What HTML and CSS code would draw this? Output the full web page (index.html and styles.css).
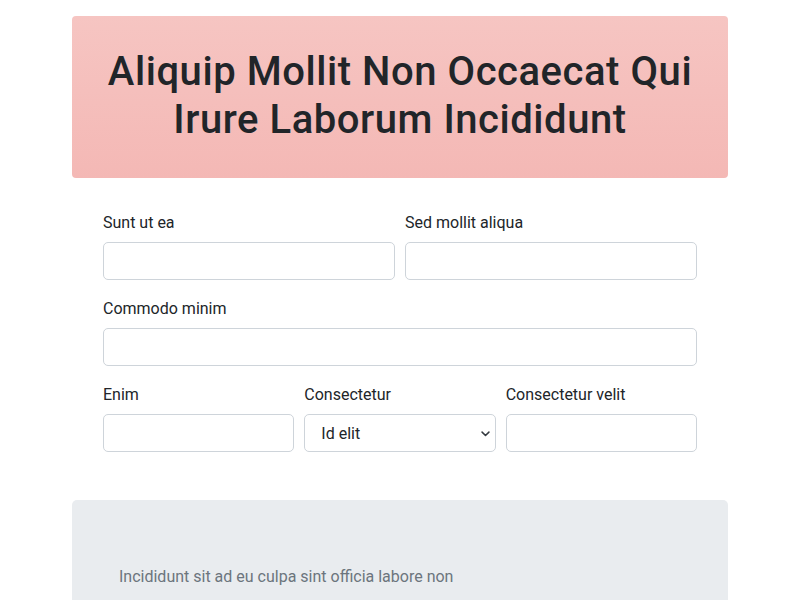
FILE: index.html
```html
<!DOCTYPE html>
<html lang="en">
<head>
<meta charset="utf-8">
<title>Form</title>
<link rel="stylesheet" href="styles.css">
</head>
<body>
<div class="container">
  <header class="hero">
    <h1 class="hero-title">Aliquip Mollit Non Occaecat Qui Irure Laborum Incididunt</h1>
  </header>
  <form class="form">
    <div class="row cols-2">
      <div class="field">
        <label class="label" for="f1">Sunt ut ea</label>
        <input class="input" id="f1" type="text">
      </div>
      <div class="field">
        <label class="label" for="f2">Sed mollit aliqua</label>
        <input class="input" id="f2" type="text">
      </div>
    </div>
    <div class="row cols-1">
      <div class="field">
        <label class="label" for="f3">Commodo minim</label>
        <input class="input" id="f3" type="text">
      </div>
    </div>
    <div class="row cols-3">
      <div class="field">
        <label class="label" for="f4">Enim</label>
        <input class="input" id="f4" type="text">
      </div>
      <div class="field">
        <label class="label" for="f5">Consectetur</label>
        <select class="input select" id="f5">
          <option>Id elit</option>
        </select>
      </div>
      <div class="field">
        <label class="label" for="f6">Consectetur velit</label>
        <input class="input" id="f6" type="text">
      </div>
    </div>
  </form>
  <section class="panel">
    <p class="panel-text">Incididunt sit ad eu culpa sint officia labore non</p>
  </section>
</div>
</body>
</html>
```
FILE: styles.css
```css
* { box-sizing: border-box; }
html, body { margin: 0; padding: 0; }
body {
  font-family: Roboto, "Open Sans", sans-serif;
  color: #212529;
  background: #fff;
  font-size: 16px;
  line-height: 1.5;
}
.container {
  width: 656px;
  margin: 0 auto;
  padding-top: 16px;
}
.hero {
  background: linear-gradient(#f6c5c2, #f4b8b5);
  border-radius: 4px;
  padding: 32px 24px 34px;
  text-align: center;
}
.hero-title {
  margin: 0;
  font-size: 40px;
  font-weight: 500;
  line-height: 48px;
  letter-spacing: 0.55px;
}
.form {
  padding: 32px 31px 48px;
  display: flex;
  flex-direction: column;
  gap: 16px;
}
.row {
  display: grid;
  gap: 10px;
}
.cols-1 { grid-template-columns: 1fr; }
.cols-2 { grid-template-columns: 1fr 1fr; }
.cols-3 { grid-template-columns: 1fr 1fr 1fr; }
.field { display: flex; flex-direction: column; }
.label {
  display: block;
  padding-top: 1px;
  margin-bottom: 7px;
  font-size: 16px;
  line-height: 24px;
}
.input {
  display: block;
  width: 100%;
  height: 38px;
  padding: 7px 12px 5px;
  font: inherit;
  color: #212529;
  background: #fff;
  border: 1px solid #ced4da;
  border-radius: 5px;
}
.select {
  appearance: none;
  -webkit-appearance: none;
  padding-left: 16px;
  background-image: url("data:image/svg+xml,%3csvg xmlns='http://www.w3.org/2000/svg' viewBox='0 0 16 16'%3e%3cpath fill='none' stroke='%23343a40' stroke-linecap='round' stroke-linejoin='round' stroke-width='2.2' d='M3 6l5 5 5-5'/%3e%3c/svg%3e");
  background-repeat: no-repeat;
  background-position: right 4px center;
  background-size: 11px 11px;
}
.panel {
  background: #e9ecef;
  border-radius: 5px;
  padding: 65px 47px 63px;
}
.panel-text {
  margin: 0;
  color: #6c757d;
  font-size: 16px;
  line-height: 24px;
}
```
